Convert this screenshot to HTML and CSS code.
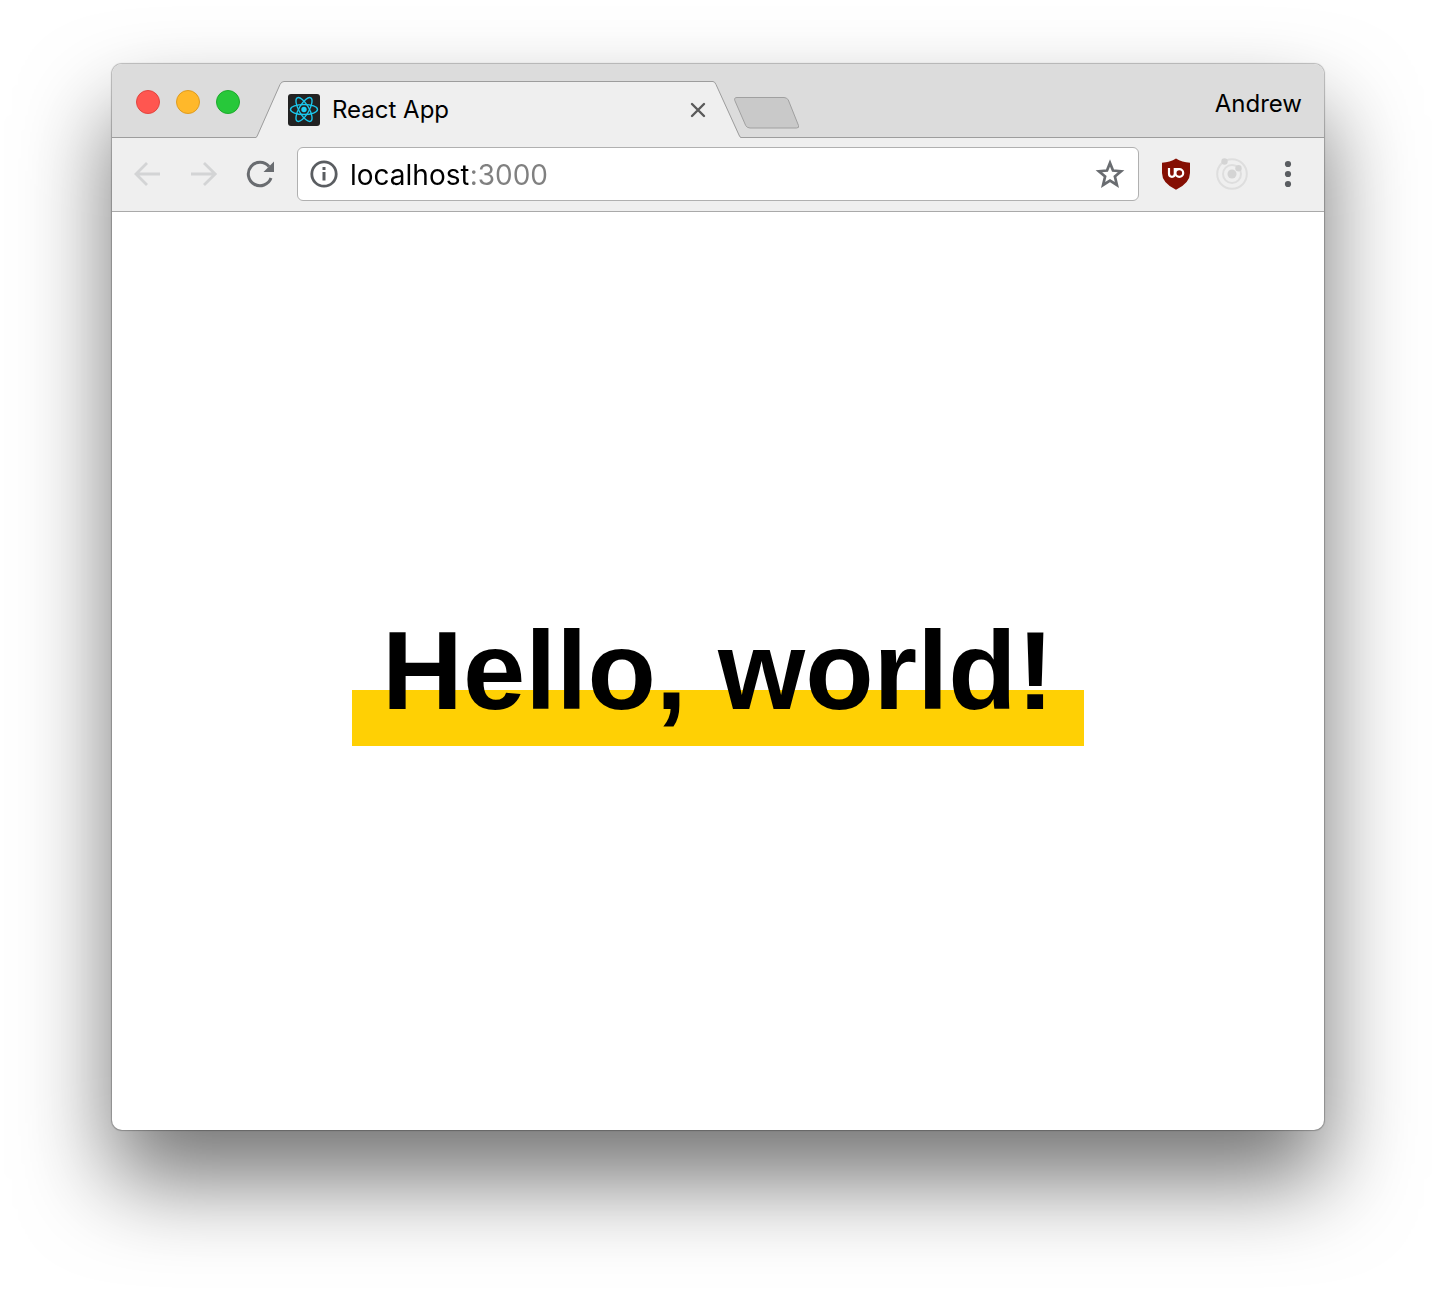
FILE: index.html
```html
<!DOCTYPE html>
<html lang="en">
<head>
<meta charset="utf-8">
<meta name="viewport" content="width=device-width, initial-scale=1">
<title>React App</title>
<link rel="stylesheet" href="styles.css">
</head>
<body>
<div class="window">
  <header class="tab-strip">
    <div class="lights">
      <button class="light light-close" type="button" aria-label="Close window"></button>
      <button class="light light-minimize" type="button" aria-label="Minimize window"></button>
      <button class="light light-zoom" type="button" aria-label="Zoom window"></button>
    </div>
    <div class="tab">
      <svg class="tab-edge" viewBox="0 0 28 57" aria-hidden="true">
        <path fill="#efefef" d="M0 57V56.500Q.8 56.500 1.500 55L24 3.500Q25.300 .5 28 .5V57Z"/>
        <path fill="none" stroke="#9d9d9d" d="M-1 56.500Q.5 56.500 1.200 55L24 3.500Q25.300 .5 28 .5"/>
      </svg>
      <div class="tab-body">
        <svg class="favicon" viewBox="0 0 32 32" aria-hidden="true">
          <rect width="32" height="32" rx="3" fill="#222"/>
          <circle cx="16" cy="15.500" r="2.700" fill="#1fd0f5"/>
          <g fill="none" stroke="#1bc8ee" stroke-width="1.400">
            <ellipse cx="16" cy="15.500" rx="13.500" ry="5"/>
            <ellipse cx="16" cy="15.500" rx="13.500" ry="5" transform="rotate(60 16 15.500)"/>
            <ellipse cx="16" cy="15.500" rx="13.500" ry="5" transform="rotate(120 16 15.500)"/>
          </g>
        </svg>
        <span class="tab-title">React App</span>
        <button class="tab-close" type="button" aria-label="Close tab">
          <svg viewBox="0 0 16 16" aria-hidden="true"><path d="M2 2l12 12M14 2L2 14" stroke="#5a5a5a" stroke-width="2.400" stroke-linecap="round"/></svg>
        </button>
      </div>
      <svg class="tab-edge" viewBox="0 0 28 57" aria-hidden="true">
        <path fill="#efefef" d="M28 57V56.500Q26.500 56.500 25.500 54L3 3.500Q1.700 .5 0 .5V57Z"/>
        <path fill="none" stroke="#9d9d9d" d="M28 56.500Q27 56.500 26 54L3 3.500Q1.700 .5 0 .5"/>
      </svg>
    </div>
    <button class="new-tab" type="button" aria-label="New tab">
      <svg viewBox="0 0 66 33" aria-hidden="true">
        <path d="M3 .5H50Q53 .5 54.300 3L64.500 28.500Q65.500 31 62.500 31H16Q13 31 11.700 28.500L.8 3.500Q-.2 .5 3 .5Z" fill="#c9c9c9" stroke="#a0a0a0"/>
      </svg>
    </button>
    <button class="profile" type="button">Andrew</button>
  </header>

  <div class="toolbar">
    <nav class="icon-group" aria-label="History">
      <button class="icon-button" type="button" aria-label="Back" disabled>
        <svg viewBox="0 0 32 32" aria-hidden="true"><path d="M28 16H5M15 5L4 16L15 27" fill="none" stroke="#d3d4d5" stroke-width="2.800"/></svg>
      </button>
      <button class="icon-button" type="button" aria-label="Forward" disabled>
        <svg viewBox="0 0 32 32" aria-hidden="true"><path d="M3 16H27M16 5L27.200 16L16 27" fill="none" stroke="#d3d4d5" stroke-width="2.800"/></svg>
      </button>
      <button class="icon-button" type="button" aria-label="Reload">
        <svg viewBox="0 0 32 32" aria-hidden="true"><path d="M27 20A11.700 11.700 0 1 1 25 8.500" fill="none" stroke="#696c70" stroke-width="3"/><path d="M30 3.500V14H19.500Z" fill="#696c70"/></svg>
      </button>
    </nav>
    <form class="omnibox">
      <svg class="omni-icon" viewBox="0 0 28 28" aria-hidden="true">
        <circle cx="14" cy="14" r="12.200" fill="none" stroke="#5a5d61" stroke-width="2.800"/>
        <path d="M12.500 7h3v3h-3zM12.500 12h3v8.500h-3z" fill="#5a5d61"/>
      </svg>
      <input class="address" type="text" value="localhost:3000" aria-label="Address" spellcheck="false">
      <button class="star" type="button" aria-label="Bookmark this page">
        <svg viewBox="0 0 32 32" aria-hidden="true"><path d="M16 5L19 12.500L27.100 13.200L20.900 18.600L22.900 27L16 22.500L9.100 27L11.100 18.600L4.900 13.200L13 12.500Z" fill="none" stroke="#696c70" stroke-width="2.700"/></svg>
      </button>
    </form>
    <div class="icon-group">
      <button class="icon-button" type="button" aria-label="uBlock Origin">
        <svg viewBox="0 0 32 32" aria-hidden="true">
          <path d="M16 .5Q22 4.500 30 4.700V15Q30 25 16 31.800Q2 25 2 15V4.700Q10 4.500 16 .5Z" fill="#850f03"/>
          <g fill="none" stroke="#fff" stroke-width="2.200"><path d="M9 10V15.500Q9 18.800 12 18.800Q14.800 18.800 14.800 15.500V10M14.800 11H19.300"/><circle cx="19.300" cy="15" r="3.900"/></g>
        </svg>
      </button>
      <button class="icon-button" type="button" aria-label="Orbit extension">
        <svg viewBox="0 0 32 32" aria-hidden="true">
          <g fill="none" stroke="#dedede" stroke-width="2"><circle cx="16" cy="16" r="14.800"/><circle cx="16" cy="16" r="9"/></g>
          <g fill="#d4d4d4"><circle cx="16" cy="16" r="4.500"/><circle cx="8.500" cy="3.500" r="3.200"/><circle cx="22.500" cy="10.200" r="3.200"/></g>
        </svg>
      </button>
      <button class="icon-button" type="button" aria-label="Menu">
        <svg viewBox="0 0 32 32" aria-hidden="true"><g fill="#5a5d61"><circle cx="16" cy="6" r="3.100"/><circle cx="16" cy="16" r="3.100"/><circle cx="16" cy="26" r="3.100"/></g></svg>
      </button>
    </div>
  </div>

  <main class="page">
    <h1 class="greeting">Hello, world!</h1>
  </main>
</div>
</body>
</html>
```
FILE: styles.css
```css
* {
  box-sizing: border-box;
}

body {
  margin: 0;
  min-height: 100vh;
  padding: 64px 112px 160px;
  display: flex;
  background: #fff;
  color: #000;
  font-family: Inter, "Noto Sans", sans-serif;
}

button {
  padding: 0;
  border: 0;
  background: none;
  color: inherit;
  font: inherit;
}

svg {
  display: block;
}

.window {
  flex: 1;
  min-width: 0;
  display: flex;
  flex-direction: column;
  border-radius: 10px;
  background: #fff;
  box-shadow: 0 0 1px 1px rgba(0, 0, 0, 0.25), 0 50px 90px rgba(0, 0, 0, 0.55);
}

.tab-strip {
  display: flex;
  align-items: flex-start;
  height: 74px;
  padding: 0 22px 0 24px;
  border-bottom: 1px solid #9d9d9d;
  border-radius: 10px 10px 0 0;
  background: #dcdcdc;
}

.lights {
  display: flex;
  gap: 16px;
  padding: 26px 16px 0 0;
}

.light {
  width: 24px;
  height: 24px;
  border: 1px solid;
  border-radius: 50%;
}

.light-close {
  background: #ff5650;
  border-color: #e2453f;
}

.light-minimize {
  background: #ffb82a;
  border-color: #df9c20;
}

.light-zoom {
  background: #27c83a;
  border-color: #1dab2c;
}

.tab {
  display: flex;
  flex: 0 1 485px;
  min-width: 0;
  margin-top: 17px;
}

.tab-edge {
  flex: none;
  width: 28px;
  height: 57px;
}

.tab-body {
  flex: 1;
  min-width: 0;
  display: flex;
  align-items: center;
  gap: 12px;
  height: 57px;
  padding: 0 7px 0 4px;
  border-top: 1px solid #9d9d9d;
  background: #efefef;
}

.favicon {
  flex: none;
  width: 32px;
  height: 32px;
}

.tab-title {
  flex: 1;
  overflow: hidden;
  white-space: nowrap;
  font-size: 24px;
  line-height: 32px;
}

.tab-close {
  width: 16px;
  height: 16px;
}

.new-tab {
  flex: none;
  width: 66px;
  height: 33px;
  margin: 33px 0 0 -7px;
}

.profile {
  margin: 24px 0 0 auto;
  font-size: 24px;
  line-height: 32px;
}

.toolbar {
  display: flex;
  align-items: center;
  gap: 21px;
  height: 74px;
  padding: 0 20px 2px;
  border-bottom: 1px solid #a9a9a9;
  background: #efefef;
}

.icon-group {
  display: flex;
  gap: 24px;
}

.icon-button,
.star {
  flex: none;
  width: 32px;
  height: 32px;
}

.omnibox {
  flex: 1;
  min-width: 0;
  display: flex;
  align-items: center;
  gap: 12px;
  height: 54px;
  padding: 0 12px;
  border: 1px solid #b0b0b0;
  border-radius: 6px;
  background: #fff;
}

.omni-icon {
  flex: none;
  width: 28px;
  height: 28px;
}

.address {
  flex: 1;
  min-width: 0;
  height: 38px;
  padding: 2px 0 0;
  border: 0;
  outline: 0;
  background: linear-gradient(90deg, #000 118px, #808080 118px);
  background-clip: text;
  -webkit-background-clip: text;
  color: transparent;
  caret-color: #000;
  font: 28px/36px Inter, "Noto Sans", sans-serif;
}

.page {
  flex: 1;
  display: flex;
  align-items: center;
  justify-content: center;
}

.greeting {
  margin: 0;
  padding: 19px 30px;
  background: linear-gradient(#fff 94px, #ffd004 94px);
  font: bold 112px/112px "Liberation Sans", Arial, sans-serif;
}
```
